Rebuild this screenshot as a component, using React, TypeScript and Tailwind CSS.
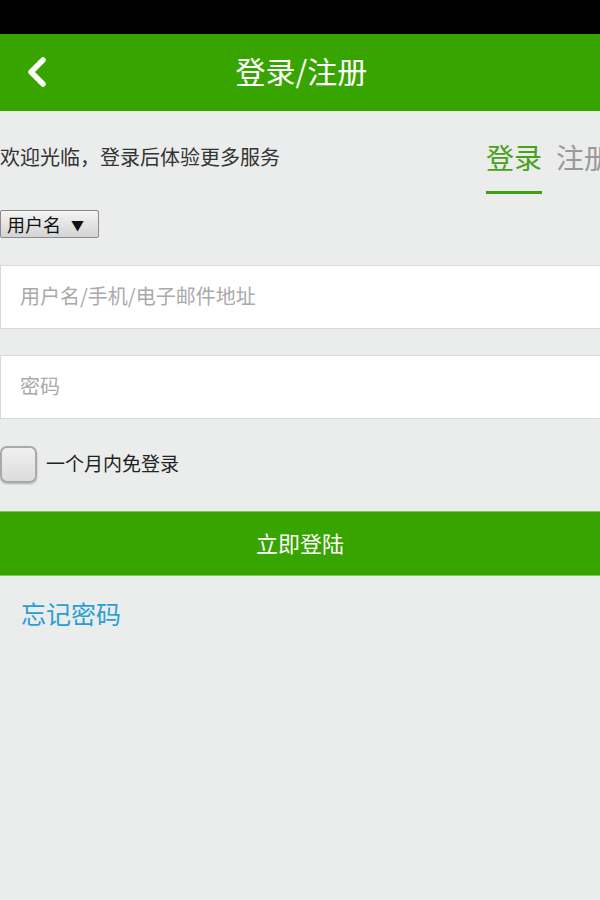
import React from "react";

export default function App() {
  const font = { fontFamily: '"Noto Sans CJK SC", "Noto Sans", sans-serif' };
  return (
    <div className="w-[600px] h-[900px] overflow-hidden bg-[#ebecec]" style={font}>
      <div className="h-[34px] bg-black" />
      <div className="h-[77px] bg-[#38a400] flex items-center relative">
        <div className="w-[76px] flex justify-center pl-[0px]">
          <svg width="24" height="34" viewBox="0 0 24 34" className="ml-[-2px] mt-[-2px]">
            <path d="M18 5 L6 17 L18 29" fill="none" stroke="#ffffff" strokeWidth="5.5" strokeLinecap="round" strokeLinejoin="round" />
          </svg>
        </div>
        <div className="absolute inset-0 flex items-center justify-center text-white text-[30px] leading-none pb-[6px] pl-[3px]">
          登录/注册
        </div>
      </div>
      <div className="pt-[28px] flex items-start whitespace-nowrap">
        <div className="w-[486px] shrink-0 text-[20px] leading-[36px] text-[#333]">欢迎光临，登录后体验更多服务</div>
        <div className="shrink-0 flex gap-[14px]">
          <div className="flex flex-col">
            <div className="text-[28px] leading-[36px] text-[#4aa11c]">登录</div>
            <div className="mt-[16px] h-[3px] w-[56px] bg-[#3e9f12]" />
          </div>
          <div className="text-[28px] leading-[36px] text-[#999]">注册</div>
        </div>
      </div>
      <div className="mt-[16px] flex">
        <div className="h-[28px] w-[99px] border border-[#8a8a8a] rounded-[2px] bg-gradient-to-b from-[#f4f4f4] to-[#d4d4d4] flex items-center pl-[6px] gap-[10px] text-[18px] text-[#111] leading-none">
          <span>用户名</span>
          <span className="text-[13px]">▼</span>
        </div>
      </div>
      <div className="mt-[27px] h-[64px] w-[620px] bg-white border border-[#d9d9d9] flex items-center pl-[19px] pb-[3px] text-[20px] text-[#aaa]">
        用户名/手机/电子邮件地址
      </div>
      <div className="mt-[26px] h-[64px] w-[620px] bg-white border border-[#d9d9d9] flex items-center pl-[19px] pb-[3px] text-[20px] text-[#aaa]">
        密码
      </div>
      <div className="mt-[27px] flex items-center gap-[9px]">
        <div className="w-[37px] h-[37px] rounded-[7px] border-2 border-[#a9a9a9] bg-gradient-to-b from-[#f0f0f0] to-[#dcdcdc] shadow-[0_1px_2px_rgba(0,0,0,0.25)]" />
        <span className="text-[19px] text-[#222] pb-[2px]">一个月内免登录</span>
      </div>
      <div className="mt-[28px] h-[65px] bg-[#38a400] border-y border-[#7cc95a] flex items-center justify-center text-white text-[22px] pb-[3px]">
        立即登陆
      </div>
      <div className="mt-[25px] pl-[21px] text-[25px] leading-[25px] text-[#2a9fd4]">忘记密码</div>
    </div>
  );
}
